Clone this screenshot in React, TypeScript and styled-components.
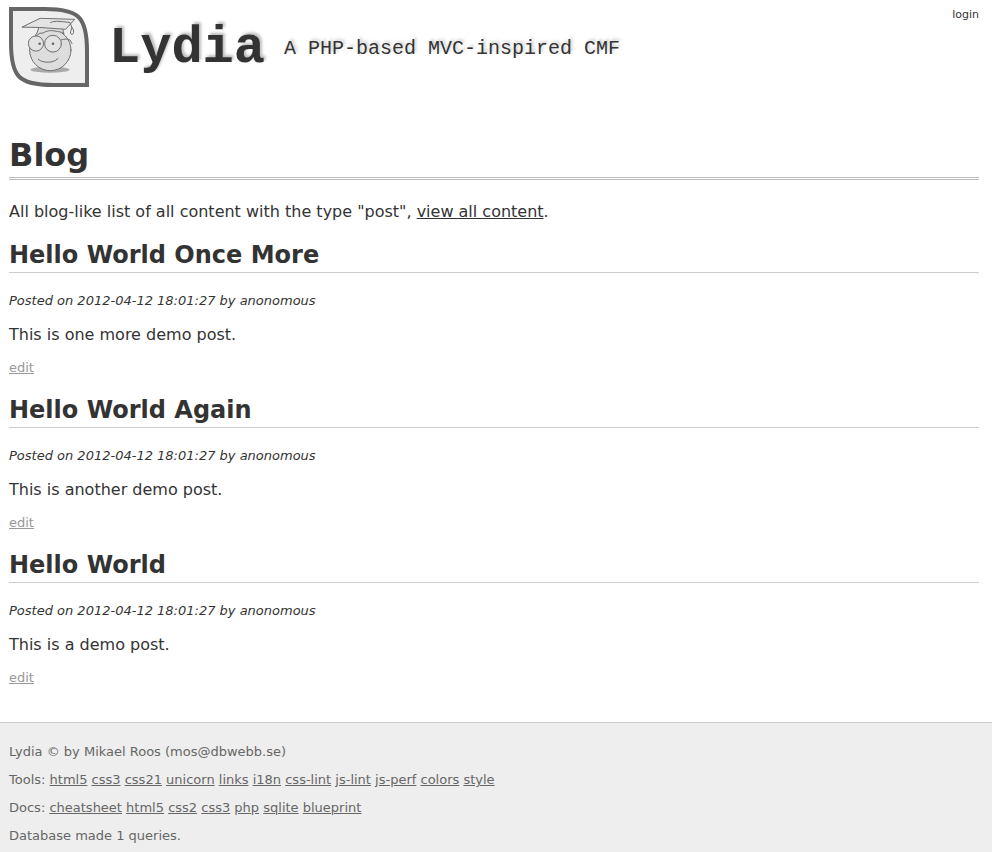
import React from "react";
import styled, { createGlobalStyle } from "styled-components";

const GlobalStyle = createGlobalStyle`
  body { margin: 0; background: #fff; color: #333; font: 16px/20px Verdana, "DejaVu Sans", sans-serif; }
`;
const Header = styled.header`
  display: flex; align-items: flex-start; padding: 7px 13px 14px 9px;
`;
const Logo = styled.svg` width: 80px; height: 80px; flex: none; `;
const SiteTitle = styled.a`
  margin-left: 20px; padding-top: 14px; color: #333; text-decoration: none;
  font: bold 52px/56px "Liberation Mono", monospace; text-shadow: 2px -2px 3px #bbb;
`;
const Slogan = styled.span`
  margin-left: 19px; padding-top: 30px; font: 20px/24px "Liberation Mono", monospace; text-shadow: 2px -2px 3px #ccc;
`;
const Login = styled.a` margin-left: auto; font-size: 11px; line-height: 16px; color: #333; text-decoration: none; `;
const Main = styled.main` padding: 34px 13px 35px 9px; `;
const PageTitle = styled.h1`
  margin: 0 0 22px; padding-bottom: 2px; font-size: 32px; line-height: 40px; border-bottom: 3px double #bbb;
`;
const Text = styled.p` margin: 0; a { color: #333; } `;
const Post = styled.article` margin-top: 16px; `;
const PostTitle = styled.h2` margin: 0; font-size: 24px; line-height: 34px; border-bottom: 1px solid #ccc; `;
const Meta = styled.p` margin: 18px 0 14px; font-size: 13px; line-height: 20px; font-style: italic; `;
const Edit = styled.p` margin: 14px 0 0; font-size: 13px; line-height: 18px; a { color: #999; } `;
const Footer = styled.footer`
  border-top: 1px solid #ccc; background: #eee; color: #666; padding: 19px 9px 6px; font-size: 13px;
  p { margin: 0 0 8px; } p:last-child { margin: 0; } a { color: #666; }
`;

const posts = [
  ["Hello World Once More", "This is one more demo post."],
  ["Hello World Again", "This is another demo post."],
  ["Hello World", "This is a demo post."],
];
const tools = ["html5", "css3", "css21", "unicorn", "links", "i18n", "css-lint", "js-lint", "js-perf", "colors", "style"];
const docs = ["cheatsheet", "html5", "css2", "css3", "php", "sqlite", "blueprint"];
const links = (items: string[]) => items.map((item) => <React.Fragment key={item}> <a href="#">{item}</a></React.Fragment>);

export default function App() {
  return (
    <>
      <GlobalStyle />
      <Header>
        <Logo viewBox="0 0 80 80" role="img" aria-label="Lydia logo">
          <path d="M2 2H36C70 2 78 10 78 44V78H44C10 78 2 70 2 36Z" fill="#eee" stroke="#666" strokeWidth="4" />
          <ellipse cx="41" cy="62.700" rx="19.500" ry="3" fill="#aaa" />
          <g fill="#ddd" stroke="#707070" strokeWidth="1" strokeLinejoin="round" strokeLinecap="round">
            <circle cx="41.300" cy="43" r="20.700" />
            <path d="M27 29Q26 27 28 26L30 20H53L55 27C52 24 49 25 46 24C41 23 37 24 34 26Q31 25 27 29Z" />
            <path d="M13.300 20L31 11.300L65.700 12.300L56.700 22.300L31 20.500Z" fill="#e3e3e3" />
            <path d="M41.500 15.500Q44 13 61 15.500L63 21M63 21Q60.500 26 62 27Q65 28 64.500 24Q65 22 63 21Z" fill="none" />
            <path d="M52 33Q58 31 61 33L63 36.500" fill="none" />
            <circle cx="27" cy="36.500" r="7.600" fill="#e3e3e3" />
            <circle cx="44" cy="36.700" r="8.400" fill="#e3e3e3" />
            <path d="M29.300 52.300Q33 56 42 55Q47 54 49 51.500" fill="none" />
          </g>
          <circle cx="30.700" cy="36.700" r="1.300" fill="#666" />
          <circle cx="44" cy="36.700" r="1.300" fill="#666" />
        </Logo>
        <SiteTitle href="#">Lydia</SiteTitle>
        <Slogan>A PHP-based MVC-inspired CMF</Slogan>
        <Login href="#">login</Login>
      </Header>
      <Main>
        <PageTitle>Blog</PageTitle>
        <Text>All blog-like list of all content with the type "post", <a href="#">view all content</a>.</Text>
        {posts.map(([title, body]) => (
          <Post key={title}>
            <PostTitle>{title}</PostTitle>
            <Meta>Posted on 2012-04-12 18:01:27 by anonomous</Meta>
            <Text>{body}</Text>
            <Edit><a href="#">edit</a></Edit>
          </Post>
        ))}
      </Main>
      <Footer>
        <p>Lydia © by Mikael Roos (mos@dbwebb.se)</p>
        <p>Tools:{links(tools)}</p>
        <p>Docs:{links(docs)}</p>
        <p>Database made 1 queries.</p>
      </Footer>
    </>
  );
}
